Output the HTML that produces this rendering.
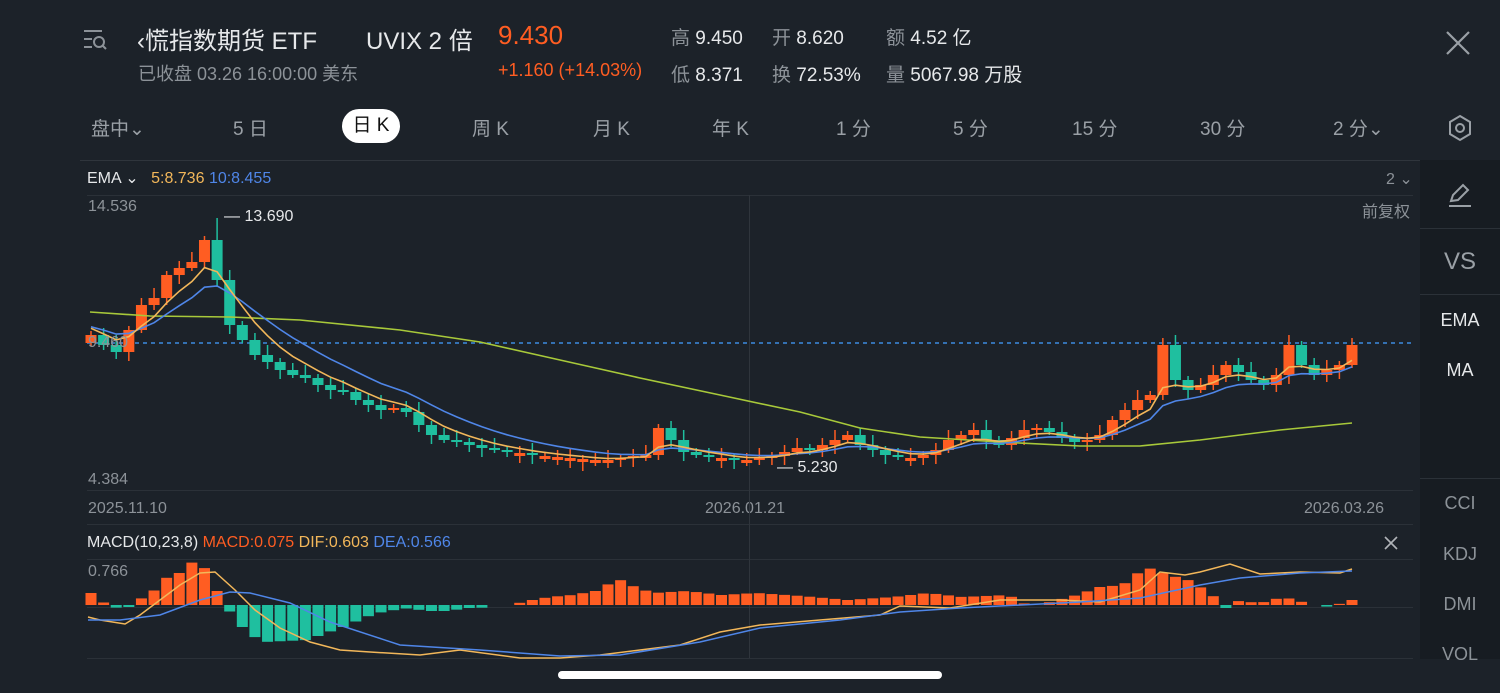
<!DOCTYPE html>
<html><head><meta charset="utf-8">
<style>
*{margin:0;padding:0;box-sizing:border-box}
body{width:1500px;height:693px;background:#1c2229;overflow:hidden;position:relative;font-family:"Liberation Sans","Noto Sans CJK SC",sans-serif;color:#e6e8ea}
.a{position:absolute;white-space:nowrap}
.g{color:#8c9298}
.o{color:#ff5d22}
.tab{position:absolute;top:114px;font-size:19px;color:#9aa0a6}
.side{position:absolute;left:1420px;top:160px;width:80px;height:499px;background:#171c22}
.sl{position:absolute;left:0;width:80px;height:1px;background:#2b3138}
.st{position:absolute;left:0;width:80px;text-align:center;font-size:18px}
</style></head><body>
<svg class="a" style="left:82px;top:28px" width="28" height="24" viewBox="0 0 28 24" fill="none" stroke="#8c9298" stroke-width="2"><path d="M2 3h18M2 11h8M2 19h8"/><circle cx="17" cy="14" r="5"/><path d="M21 18l3 3"/></svg>
<div class="a" style="left:137px;top:21px;font-size:24px;color:#e6e8ea">‹慌指数期货 ETF</div>
<div class="a" style="left:366px;top:21px;font-size:24px">UVIX 2 倍</div>
<div class="a o" style="left:498px;top:20px;font-size:26px">9.430</div>
<div class="a g" style="left:138px;top:60px;font-size:18px">已收盘 03.26 16:00:00 美东</div>
<div class="a o" style="left:498px;top:60px;font-size:18px">+1.160 (+14.03%)</div>
<div class="a" style="left:671px;top:23px;font-size:19px"><span class="g">高</span> 9.450</div>
<div class="a" style="left:772px;top:23px;font-size:19px"><span class="g">开</span> 8.620</div>
<div class="a" style="left:886px;top:23px;font-size:19px"><span class="g">额</span> 4.52 亿</div>
<div class="a" style="left:671px;top:60px;font-size:19px"><span class="g">低</span> 8.371</div>
<div class="a" style="left:772px;top:60px;font-size:19px"><span class="g">换</span> 72.53%</div>
<div class="a" style="left:886px;top:60px;font-size:19px"><span class="g">量</span> 5067.98 万股</div>
<svg class="a" style="left:1444px;top:29px" width="28" height="28" stroke="#9aa0a6" stroke-width="2.2"><path d="M3 3L25 25M25 3L3 25"/></svg>

<div class="tab" style="left:91px">盘中⌄</div>
<div class="tab" style="left:233px">5 日</div>
<div class="a" style="left:342px;top:109px;width:58px;height:34px;border-radius:17px;background:#fff;color:#111;font-size:19px;text-align:center;line-height:34px">日 K</div>
<div class="tab" style="left:472px">周 K</div>
<div class="tab" style="left:593px">月 K</div>
<div class="tab" style="left:712px">年 K</div>
<div class="tab" style="left:836px">1 分</div>
<div class="tab" style="left:953px">5 分</div>
<div class="tab" style="left:1072px">15 分</div>
<div class="tab" style="left:1200px">30 分</div>
<div class="tab" style="left:1333px">2 分⌄</div>
<svg class="a" style="left:1447px;top:114px" width="26" height="28" fill="none" stroke="#9aa0a6" stroke-width="2"><path d="M13 2L23 8V20L13 26L3 20V8Z"/><circle cx="13" cy="14" r="4"/></svg>

<div class="side">
<div class="sl" style="top:68px"></div><div class="sl" style="top:134px"></div><div class="sl" style="top:318px"></div>
<svg class="a" style="left:27px;top:21px" width="26" height="28" fill="none" stroke="#9aa0a6" stroke-width="2"><path d="M4 20L6 14L16 4L21 9L11 19Z"/><path d="M2 25H24"/></svg>
<div class="st" style="top:88px;font-size:24px;color:#9aa0a6">VS</div>
<div class="st" style="top:150px;color:#e6e8ea">EMA</div>
<div class="st" style="top:200px;color:#e6e8ea">MA</div>
<div class="st" style="top:333px;color:#8c9298">CCI</div>
<div class="st" style="top:384px;color:#8c9298">KDJ</div>
<div class="st" style="top:434px;color:#8c9298">DMI</div>
<div class="st" style="top:484px;color:#8c9298">VOL</div>
</div>

<div class="a" style="left:80px;top:160px;width:1340px;height:1px;background:#2f353c"></div>
<div class="a" style="left:87px;top:168px;font-size:16px">EMA ⌄ <span style="color:#f2b75a;margin-left:8px">5:8.736</span> <span style="color:#4f86e8">10:8.455</span></div>
<div class="a g" style="left:1386px;top:169px;font-size:16px">2 ⌄</div>
<div class="a" style="left:87px;top:195px;width:1326px;height:1px;background:#2b3138"></div>
<div class="a g" style="left:1362px;top:198px;font-size:16px">前复权</div>
<div class="a g" style="left:88px;top:198px;font-size:16px">14.536</div>
<div class="a g" style="left:88px;top:471px;font-size:16px">4.384</div>
<div class="a" style="left:87px;top:490px;width:1326px;height:1px;background:#2b3138"></div>
<div class="a g" style="left:88px;top:500px;font-size:16px">2025.11.10</div>
<div class="a g" style="left:705px;top:500px;font-size:16px">2026.01.21</div>
<div class="a g" style="left:1304px;top:500px;font-size:16px">2026.03.26</div>
<div class="a" style="left:87px;top:524px;width:1326px;height:1px;background:#2b3138"></div>
<div class="a" style="left:87px;top:534px;font-size:16px">MACD(10,23,8) <span class="o">MACD:0.075</span> <span style="color:#f2b75a">DIF:0.603</span> <span style="color:#4f86e8">DEA:0.566</span></div>
<svg class="a" style="left:1383px;top:535px" width="16" height="16" stroke="#b0b4b8" stroke-width="1.6"><path d="M2 2L14 14M14 2L2 14"/></svg>
<div class="a" style="left:87px;top:559px;width:1326px;height:1px;background:#2b3138"></div>
<div class="a" style="left:87px;top:607px;width:1326px;height:1px;background:#2b3138"></div>
<div class="a" style="left:87px;top:658px;width:1326px;height:1px;background:#2b3138"></div>
<div class="a g" style="left:88px;top:563px;font-size:16px">0.766</div>
<div class="a" style="left:749px;top:195px;width:1px;height:463px;background:#2f353c"></div>

<svg id="ch" class="a" style="left:0;top:0" width="1500" height="693"></svg>
<div class="a" style="left:88px;top:334px;font-size:16px;color:#8c9298">9.460</div>
<div class="a" style="left:224px;top:208px;font-size:16px">— 13.690</div>
<div class="a" style="left:777px;top:459px;font-size:16px">— 5.230</div>
<div class="a" style="left:558px;top:671px;width:384px;height:8px;border-radius:4px;background:#fff"></div>

<script>
var C=[335,345,352,330,305,298,275,268,262,240,280,325,340,355,362,370,375,378,385,390,392,400,405,410,408,412,425,435,440,442,445,448,450,452,453,455,456,457,458,459,460,460,458,456,455,428,440,452,455,457,458,460,460,458,456,452,448,450,445,440,435,445,450,455,457,458,455,450,440,435,430,440,445,438,430,428,432,438,442,440,435,420,410,400,395,345,380,390,385,375,365,372,380,385,375,345,365,375,370,365,345];
var N=C.length,x0=91,x1=1352,dx=(x1-x0)/(N-1),s='';
var OR='#ff5d22',TE='#1fbf9f';
s+='<line x1="87" y1="343" x2="1413" y2="343" stroke="#3d8be0" stroke-width="1.5" stroke-dasharray="4 4"/>';
for(var i=0;i<N;i++){var x=x0+i*dx,o=i?C[i-1]:C[0]+8,c=C[i];if(Math.abs(o-c)<2)o=c+3;var up=c<o,col=up?OR:TE;var t=Math.min(o,c),b=Math.max(o,c);var h=t-4-(i%3)*3,l=b+3+(i%4)*2;if(i==10)h=218;
s+='<line x1="'+x+'" y1="'+h+'" x2="'+x+'" y2="'+l+'" stroke="'+col+'" stroke-width="1.5"/><rect x="'+(x-5.5)+'" y="'+t+'" width="11" height="'+(b-t)+'" fill="'+col+'"/>';}
function ema(p,a0){var r=[],e=a0;for(var i=0;i<N;i++){e=e+(C[i]-e)*2/(p+1);r.push(e)}return r}
function pl(a,col){var p='';for(var i=0;i<N;i++)p+=(x0+i*dx).toFixed(1)+','+a[i].toFixed(1)+' ';return '<polyline points="'+p+'" fill="none" stroke="'+col+'" stroke-width="1.6"/>'}
s+='<polyline points="90,312 150,316 230,317 300,320 400,330 480,342 560,360 640,378 720,395 800,412 860,428 920,437 1000,442 1080,446 1140,446 1200,440 1280,430 1352,423" fill="none" stroke="#a8c93a" stroke-width="1.6"/>';
s+=pl(ema(10,325),'#4f86e8')+pl(ema(5,325),'#f2b75a');
var K=[[0,12],[1,3],[2,-2],[3,-5],[4,5],[5,9],[6,20],[7,32],[8,32],[9,45],[10,36],[11,14],[12,-5],[13,-20],[14,-30],[15,-37],[17,-36],[19,-35],[20,-30],[22,-22],[24,-12],[25,-8],[27,-4],[28,-3],[29,-6],[31,-6],[33,-3],[34,-3],[35,0],[37,1],[38,4],[40,8],[42,10],[44,14],[46,26],[47,20],[49,12],[52,14],[55,10],[58,12],[62,9],[66,5],[70,8],[73,12],[76,8],[80,10],[82,-2],[84,4],[86,10],[88,18],[90,20],[92,38],[94,30],[96,24],[98,8],[99,-3],[100,4],[102,2],[104,8],[106,2],[108,-2],[110,5]];
function kv(i){for(var j=0;j<K.length-1;j++){if(i>=K[j][0]&&i<=K[j+1][0]){var f=(i-K[j][0])/((K[j+1][0]-K[j][0])||1);return K[j][1]+(K[j+1][1]-K[j][1])*f}}return 3}
for(var i=0;i<N;i++){var v=kv(i*110/(N-1)),x=x0+i*dx;if(Math.abs(v)<0.8)continue;s+='<rect x="'+(x-5.5)+'" y="'+(v>0?605-v:605)+'" width="11" height="'+Math.abs(v)+'" fill="'+(v>0?OR:TE)+'"/>';}
s+='<polyline points="88,617 100,620 125,624 140,615 160,600 180,585 200,573 215,572 235,590 255,610 280,628 310,642 340,650 370,652 420,655 460,650 520,658 560,658 600,655 640,650 680,645 720,632 760,625 820,620 880,615 900,606 950,608 1000,600 1060,600 1100,602 1140,590 1160,572 1185,575 1200,572 1230,564 1260,574 1300,572 1340,573 1352,569" fill="none" stroke="#f2b75a" stroke-width="1.5"/>';
s+='<polyline points="88,620 120,620 160,615 200,600 230,592 250,593 290,603 330,622 400,645 480,650 560,656 620,655 700,642 760,628 840,620 900,612 960,608 1080,602 1140,598 1200,585 1240,578 1300,573 1352,571" fill="none" stroke="#4f86e8" stroke-width="1.5"/>';
document.getElementById('ch').innerHTML=s;
</script>
</body></html>
